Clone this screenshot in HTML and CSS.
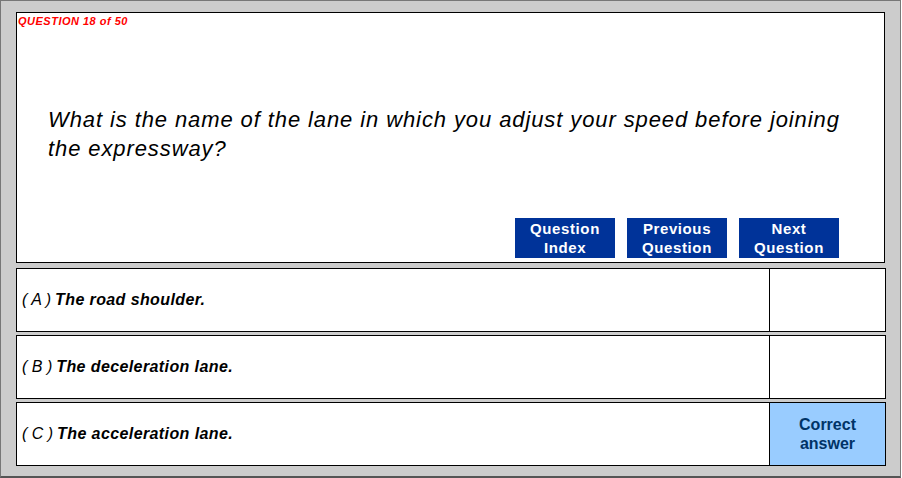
FILE: index.html
```html
<!DOCTYPE html>
<html lang="en">
<head>
    <meta charset="UTF-8">
    <title>Question 18 of 50</title>
    <link rel="stylesheet" href="styles.css">
</head>
<body>
    <div class="frame">
        <div class="question-panel">
            <div class="counter">QUESTION 18 of 50</div>
            <p class="question-text">What is the name of the lane in which you adjust your speed before joining the expressway?</p>
            <div class="nav">
                <button class="nav-button">Question<br>Index</button>
                <button class="nav-button">Previous<br>Question</button>
                <button class="nav-button">Next<br>Question</button>
            </div>
        </div>
        <div class="answers">
            <div class="answer-row">
                <div class="answer-text"><span class="letter">( A )</span> The road shoulder.</div>
                <div class="answer-mark"></div>
            </div>
            <div class="answer-row">
                <div class="answer-text"><span class="letter">( B )</span> The deceleration lane.</div>
                <div class="answer-mark"></div>
            </div>
            <div class="answer-row">
                <div class="answer-text"><span class="letter">( C )</span> The acceleration lane.</div>
                <div class="answer-mark correct">Correct<br>answer</div>
            </div>
        </div>
    </div>
</body>
</html>
```

FILE: styles.css
```css
body {
    margin: 0;
    padding: 0;
    background: #ffffff;
    font-family: "Liberation Sans", Arial, sans-serif;
}

.frame {
    box-sizing: border-box;
    width: 901px;
    height: 478px;
    background: #cccccc;
    border: 1px solid #777777;
    border-bottom: 2px solid #555555;
    padding: 11px 15px 0 15px;
}

.question-panel {
    box-sizing: border-box;
    width: 869px;
    height: 251px;
    background: #ffffff;
    border: 1px solid #000000;
    display: flex;
    flex-direction: column;
}

.counter {
    color: #ff0000;
    font-size: 11px;
    font-weight: bold;
    font-style: italic;
    letter-spacing: 0.5px;
    padding: 2px 0 0 1px;
    line-height: 13px;
}

.question-text {
    margin: 77px 0 0 31px;
    width: 810px;
    font-size: 22px;
    font-style: italic;
    letter-spacing: 0.9px;
    line-height: 29px;
    color: #000000;
}

.nav {
    margin-top: auto;
    display: flex;
    justify-content: flex-end;
    gap: 12px;
    padding: 0 45px 4px 0;
}

.nav-button {
    width: 100px;
    height: 40px;
    background: #003399;
    color: #ffffff;
    border: none;
    padding: 0;
    font-family: "Liberation Sans", Arial, sans-serif;
    font-size: 15px;
    font-weight: bold;
    letter-spacing: 0.6px;
    line-height: 19px;
}

.answers {
    margin-top: 5px;
    display: flex;
    flex-direction: column;
    gap: 3px;
}

.answer-row {
    box-sizing: border-box;
    width: 870px;
    height: 64px;
    background: #ffffff;
    border: 1px solid #000000;
    display: flex;
}

.answer-text {
    flex-grow: 1;
    display: flex;
    align-items: center;
    padding-left: 5px;
    font-size: 16px;
    font-style: italic;
    font-weight: bold;
    letter-spacing: 0.4px;
    color: #000000;
}

.letter {
    font-weight: normal;
    letter-spacing: 0;
    margin-right: 4px;
}

.answer-mark {
    width: 115px;
    border-left: 1px solid #000000;
    display: flex;
    align-items: center;
    justify-content: center;
    text-align: center;
    font-size: 16px;
    font-weight: bold;
    line-height: 19px;
    color: #003366;
}

.correct {
    background: #99ccff;
}
```
